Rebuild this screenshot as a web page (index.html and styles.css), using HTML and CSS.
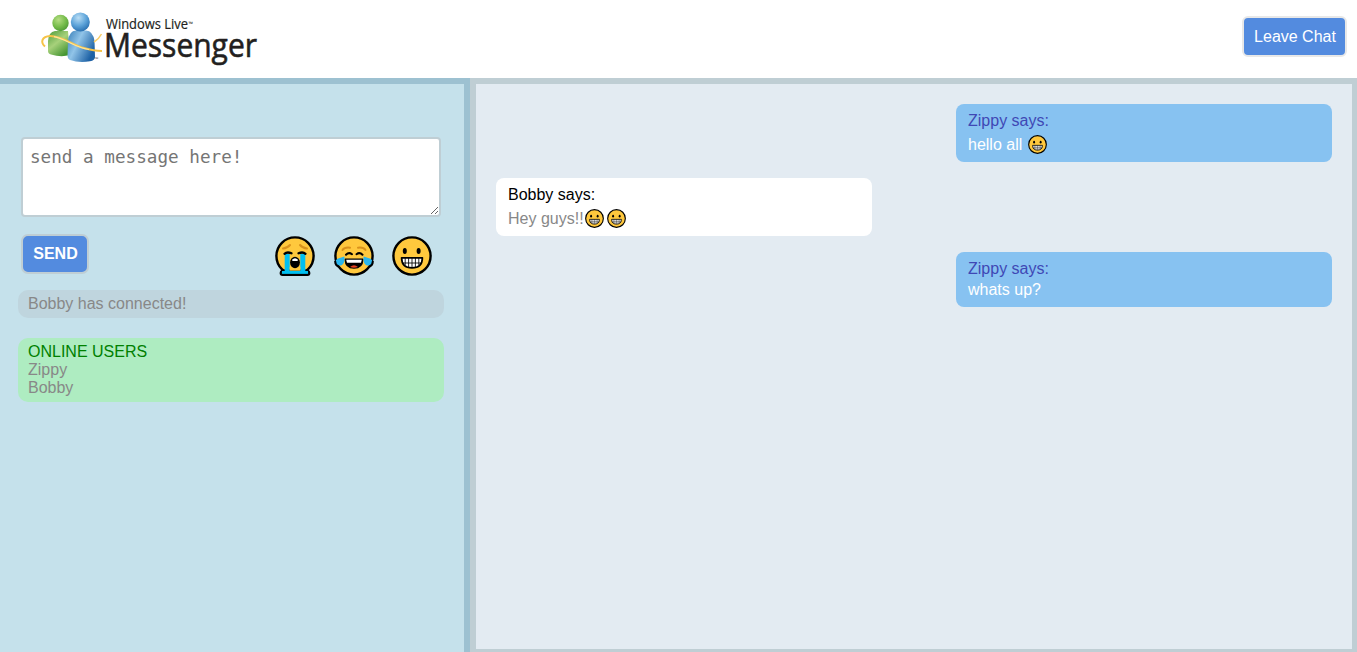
FILE: index.html
```html
<!DOCTYPE html>
<html lang="en">
<head>
<meta charset="utf-8">
<title>Messenger</title>
<link rel="stylesheet" href="styles.css">
</head>
<body>
<svg class="defs" aria-hidden="true">
  <symbol id="grin" viewBox="0 0 40 40">
    <circle cx="20" cy="20" r="18.6" fill="#ffc83d" stroke="#000" stroke-width="2.4"/>
    <ellipse cx="12.800" cy="15" rx="2" ry="3"/><ellipse cx="26.6" cy="15" rx="2" ry="3"/>
    <path d="M9.6 21.8H30.4C30.4 28.5 26.5 31.9 20 31.9S9.6 28.5 9.6 21.8Z" fill="#fff" stroke="#000" stroke-width="1.7" stroke-linejoin="round"/>
    <path d="M10 27H30M13.2 22V29.5M16.6 22V31.5M20 22V32M23.4 22V31.5M26.8 22V29.5" fill="none" stroke="#000" stroke-width=".85"/>
  </symbol>
  <symbol id="joy" viewBox="0 0 40 40">
    <circle cx="20" cy="20" r="18.6" fill="#ffc83d" stroke="#000" stroke-width="2.4"/>
    <path d="M8.500 14Q10.500 11 16 11.700M24 11.700Q29.500 11 31.500 14" fill="none" stroke="#d9911b" stroke-width="2" stroke-linecap="round"/>
    <path d="M12 18.800Q14.800 15.800 18 18.200M22.500 18.200Q25.700 15.800 28.500 18.800" fill="none" stroke="#000" stroke-width="2" stroke-linecap="round"/>
    <path d="M11.300 23.400H28.700C28.500 29 25 31.900 20 31.900S11.500 29 11.300 23.400Z" fill="#000" stroke="#000" stroke-width="1.600" stroke-linejoin="round"/>
    <path d="M12.200 23.800H27.800L27 26.800H13Z" fill="#fff"/>
    <path d="M16 31Q20 27.500 24 31Q20 32.500 16 31Z" fill="#e9401f"/>
    <path d="M10.300 20.400C11.200 25.500 9.500 29.500 5.500 29.500C1 29.500 .500 24.500 3.500 22.700ZM29.700 20.400C28.800 25.500 30.500 29.500 34.500 29.500C39 29.500 39.500 24.500 36.500 22.700Z" fill="#29b6ee"/>
    <path d="M1.200 25Q1 29 4.500 30.500M38.800 25Q39 29 35.500 30.500" fill="none" stroke="#000" stroke-width="2"/>
  </symbol>
  <symbol id="sob" viewBox="0 0 40 40">
    <circle cx="20" cy="20" r="18.600" fill="#ffc83d" stroke="#000" stroke-width="2.400"/>
    <path d="M8 12.500Q12.500 12 15 9M25 9Q27.500 12 32 12.500" fill="none" stroke="#d9911b" stroke-width="2" stroke-linecap="round"/>
    <path d="M7 34.600H33Q34.300 35.500 34.300 37Q34.300 38.800 32.500 38.800H7.500Q5.700 38.800 5.700 37Q5.700 35.500 7 34.600Z" fill="#00bff0" stroke="#000" stroke-width="2.200" stroke-linejoin="round"/>
    <path d="M9.700 18H14.700V34.700H25.300V18H30.300V36.500H9.700Z" fill="#00bff0"/>
    <path d="M14.700 31H25.300V34.700H14.700Z" fill="#ffc83d"/>
    <path d="M7 35H33V37.500H7Z" fill="#00bff0"/>
    <path d="M9.500 17.800Q12 15.500 16.500 17.300M23.500 17.300Q28 15.500 30.500 17.800" fill="none" stroke="#000" stroke-width="2.300" stroke-linecap="round"/>
    <ellipse cx="20" cy="26.500" rx="4.900" ry="5.800"/>
    <path d="M17 23.800Q20 20.800 23 23.800L22.500 25H17.500Z" fill="#fff"/>
  </symbol>
</svg>

<header class="header">
  <div class="logo">
    <svg class="logo-mark" viewBox="0 0 66 60">
      <defs>
        <radialGradient id="greenHead" cx=".38" cy=".3" r=".75"><stop offset="0" stop-color="#b5dd83"/><stop offset=".6" stop-color="#74bb49"/><stop offset="1" stop-color="#4e9935"/></radialGradient>
        <linearGradient id="greenBody" x2=".7" y2="1"><stop stop-color="#4e9c3c"/><stop offset=".5" stop-color="#a7d17b"/><stop offset="1" stop-color="#439431"/></linearGradient>
        <radialGradient id="blueHead" cx=".4" cy=".28" r=".75"><stop offset="0" stop-color="#b9ddf4"/><stop offset=".55" stop-color="#5fa5da"/><stop offset="1" stop-color="#286fb0"/></radialGradient>
        <linearGradient id="blueBody" x2="1" y2=".55"><stop stop-color="#387fb9"/><stop offset=".45" stop-color="#91c4e8"/><stop offset="1" stop-color="#1d61a5"/></linearGradient>
      </defs>
      <path d="M10 33Q10.500 24 17 23H30L32 47Q23 49.500 13 46.500Q10 45.500 10 43Z" fill="url(#greenBody)"/>
      <circle cx="22.500" cy="15" r="8.200" fill="url(#greenHead)"/>
      <path d="M30 33Q31 23 38 22.500H48Q55 23 56.500 33L57 49Q57 52.500 52 53.200Q41 55 32 52Q29.500 51 29.500 47Z" fill="url(#blueBody)"/>
      <circle cx="42.300" cy="14" r="9.500" fill="url(#blueHead)"/>
      <path d="M7 38.500C2 34 4 28.500 12 28C23 27.500 35 37 46 40Q56 43 64 43" fill="none" stroke="#f6c348" stroke-width="2"/>
      <path d="M16 28.700C28 31 36 39 51 41.500" fill="none" stroke="#ffe59a" stroke-width="1.200"/>
      <path d="M56 34Q61 31 63.500 26" fill="none" stroke="#f8cc65" stroke-width="1.500"/>
      <text x="56.500" y="53" class="mark-tm">™</text>
    </svg>
    <svg class="logo-type" viewBox="0 0 160 60">
      <text x="2" y="21.300" textLength="82" lengthAdjust="spacingAndGlyphs" class="type-small">Windows Live</text>
      <text x="84.500" y="18" class="type-tm">™</text>
      <text x="0" y="49" textLength="153" lengthAdjust="spacingAndGlyphs" class="type-large">Messenger</text>
    </svg>
  </div>
  <button class="button leave">Leave Chat</button>
</header>

<main class="main">
  <section class="side">
    <textarea class="compose" placeholder="send a message here!"></textarea>
    <div class="actions">
      <button class="button send">SEND</button>
      <div class="emoji-picker">
        <svg class="emoji-large"><use href="#sob"/></svg>
        <svg class="emoji-large"><use href="#joy"/></svg>
        <svg class="emoji-large"><use href="#grin"/></svg>
      </div>
    </div>
    <div class="notice">Bobby has connected!</div>
    <div class="users">
      <div class="users-title">ONLINE USERS</div>
      <div>Zippy</div>
      <div>Bobby</div>
    </div>
  </section>
  <section class="chat">
    <article class="message own">
      <div class="author">Zippy says:</div>
      <div class="text has-emoji"><span>hello all&nbsp;</span><svg class="emoji"><use href="#grin"/></svg></div>
    </article>
    <article class="message">
      <div class="author">Bobby says:</div>
      <div class="text has-emoji"><span>Hey guys!!</span><svg class="emoji"><use href="#grin"/></svg><svg class="emoji"><use href="#grin"/></svg></div>
    </article>
    <article class="message own">
      <div class="author">Zippy says:</div>
      <div class="text">whats up?</div>
    </article>
  </section>
</main>
</body>
</html>
```

FILE: styles.css
```css
* { box-sizing: border-box; }
body {
  margin: 0;
  height: 100vh;
  display: flex;
  flex-direction: column;
  overflow: hidden;
  background: #fff;
  font: 16px/18px "Liberation Sans", Arial, sans-serif;
}
.defs { display: none; }
.header {
  height: 78px;
  flex: none;
  display: flex;
  justify-content: space-between;
  align-items: flex-start;
  padding: 8px 10px 0 38px;
}
.logo { display: flex; }
.logo-mark { width: 66px; height: 60px; overflow: visible; }
.logo-type { width: 160px; height: 60px; }
.logo-type text { font-family: "Open Sans", sans-serif; fill: #231f20; }
.logo-type .type-small { font-size: 14px; stroke: #231f20; stroke-width: .2px; }
.logo-type .type-large { font-size: 32.5px; stroke: #231f20; stroke-width: .6px; }
.logo-type .type-tm { font-size: 6px; }
.mark-tm { font: 5px "Open Sans", sans-serif; fill: #555; }
.button {
  height: 40px;
  padding: 0;
  border: 2px solid #bfced4;
  border-radius: 6px;
  background: #538bdf;
  color: #fff;
  font: 16px "Liberation Sans", Arial, sans-serif;
}
.leave { width: 105px; height: 41px; margin-top: 8px; border-color: #e8e8e8; padding: 1px 0 0 1px; }
.main { flex: 1; display: flex; min-height: 0; }
.side {
  width: 470px;
  border-top: 6px solid #9dc1d1;
  border-right: 6px solid #9dc1d1;
  background: #c5e1eb;
  padding: 53px 20px 0 18px;
  color: #888;
}
.compose {
  display: block;
  width: 420px;
  height: 80px;
  margin-left: 3px;
  padding: 7px 7px;
  border: 2px solid #bfced4;
  border-radius: 4px;
  background: #fff;
  font: 17.65px/22px "DejaVu Sans Mono", monospace;
}
.compose::placeholder { color: #757575; }
.actions {
  display: flex;
  justify-content: space-between;
  margin: 17px 12px 0 3px;
  height: 56px;
}
.send { width: 68px; font-weight: bold; padding-left: 1px; border-radius: 7px; }
.emoji-picker { display: flex; gap: 18.5px; padding-top: 2px; }
.emoji-large { width: 40px; height: 40px; }
.notice {
  height: 28px;
  padding: 5px 10px;
  border-radius: 10px;
  background: #bfd5de;
}
.users {
  height: 64px;
  margin-top: 20px;
  padding: 5px 10px;
  border-radius: 10px;
  background: #aeecc1;
}
.users-title { color: #008000; }
.chat {
  flex: 1;
  display: flex;
  flex-direction: column;
  gap: 16px;
  border: solid #bfced4;
  border-width: 6px 5px 3px 6px;
  background: #e3ebf2;
  padding: 20px;
}
.message {
  width: 376px;
  padding: 8px 12px;
  border-radius: 8px;
  background: #fff;
  color: #000;
}
.own { align-self: flex-end; background: #87c2f1; color: #3f48b5; }
.text { margin-top: 3px; color: #888; }
.own .text { color: #fff; }
.has-emoji { display: flex; align-items: center; height: 21px; padding-top: 3px; }
.emoji { width: 19px; height: 19px; margin: -2px 2px 0 1px; }
```
